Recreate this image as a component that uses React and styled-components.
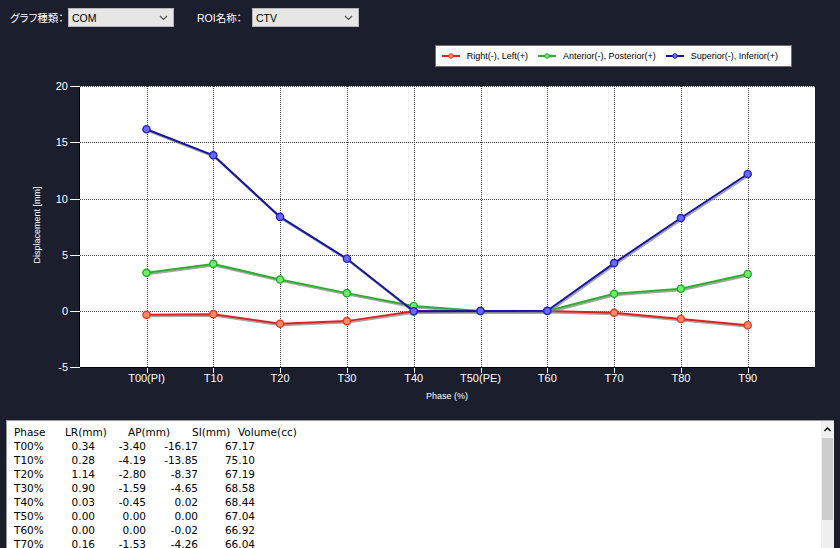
import React from "react";
import styled, { createGlobalStyle } from "styled-components";

const Global = createGlobalStyle`
  html, body { margin: 0; padding: 0; background: #1b1e2d; overflow: hidden; }
  body { width: 840px; height: 548px; font-family: "Liberation Sans", Arial, sans-serif; }
`;

const Page = styled.div`
  width: 840px;
  height: 548px;
  display: flex;
  flex-direction: column;
  background: #1b1e2d;
  overflow: hidden;
  & > * { flex-shrink: 0; }
`;

const TopBar = styled.div`
  display: flex;
  align-items: center;
  height: 19px;
  padding: 8px 0 0 10px;
`;

const Field = styled.div`
  display: flex;
  align-items: center;
  margin-right: ${(p) => p.$mr || 0}px;
`;

const Label = styled.span`
  color: #ffffff;
  font-family: "Liberation Sans", "Noto Sans CJK JP", sans-serif;
  font-size: 10.5px;
  font-feature-settings: "palt";
  width: ${(p) => p.$w}px;
  white-space: nowrap;
`;

const Select = styled.div`
  box-sizing: border-box;
  width: ${(p) => p.$w}px;
  height: 19px;
  background: #e6e6e6;
  border: 1px solid #b4b4b4;
  display: flex;
  align-items: center;
  justify-content: space-between;
  padding: 0 5px 0 3px;
  font-family: "Liberation Sans", Arial, sans-serif;
  font-size: 10.5px;
  color: #000;
`;

const LegendRow = styled.div`
  display: flex;
  justify-content: flex-end;
  padding-right: 48px;
  margin-top: 18px;
`;

const Legend = styled.div`
  box-sizing: border-box;
  height: 22px;
  display: flex;
  align-items: center;
  gap: 10px;
  padding: 0 13px 0 6px;
  background: #ffffff;
  border: 1px solid #6e6e6e;
`;

const LegendItem = styled.div`
  display: flex;
  align-items: center;
  gap: 7px;
  font-family: "Liberation Sans", Arial, sans-serif;
  font-size: 9px;
  color: #000;
  white-space: nowrap;
`;

const ChartSvg = styled.svg`
  display: block;
  width: 840px;
  height: 348px;
`;

const Panel = styled.div`
  box-sizing: border-box;
  margin: 5px 6px 0 6px;
  height: 140px;
  background: #ffffff;
  border-top: 1px solid #9a9a9a;
  border-left: 1px solid #9a9a9a;
  display: flex;
`;

const TableBody = styled.div`
  flex: 1;
  padding: 4px 0 0 7px;
  font-family: "DejaVu Sans", Verdana, sans-serif;
  font-size: 10.5px;
  line-height: 14px;
  color: #000;
`;

const HeaderRow = styled.div`
  display: grid;
  grid-template-columns: 51px 63px 64px 46px auto;
  white-space: nowrap;
`;

const DataRow = styled.div`
  display: grid;
  grid-template-columns: 40px 41px 51px 52px 57px;
  white-space: nowrap;
  & > span { text-align: right; }
  & > span:first-child { text-align: left; }
`;

const Scrollbar = styled.div`
  width: 13px;
  background: #f0f0f0;
  display: flex;
  flex-direction: column;
`;

const ScrollArrow = styled.div`
  height: 17px;
  display: flex;
  align-items: center;
  justify-content: center;
`;

const ScrollThumb = styled.div`
  height: 82px;
  margin: 0 1px;
  background: #cdcdcd;
`;

const Chevron = () => (
  <svg width="9" height="6" viewBox="0 0 9 6">
    <path d="M1 1 L4.5 4.5 L8 1" fill="none" stroke="#555" strokeWidth="1.2" />
  </svg>
);

const series = [
  {
    name: "Right(-), Left(+)",
    line: "#dd2020",
    fill: "#ff8a6a",
    stroke: "#e03a20",
    data: [-0.34, -0.28, -1.14, -0.9, -0.03, 0, 0, -0.16, -0.71, -1.27],
  },
  {
    name: "Anterior(-), Posterior(+)",
    line: "#2eae2e",
    fill: "#6cf06c",
    stroke: "#25a825",
    data: [3.4, 4.19, 2.8, 1.59, 0.45, 0, 0, 1.53, 1.98, 3.29],
  },
  {
    name: "Superior(-), Inferior(+)",
    line: "#1414a4",
    fill: "#6a6af2",
    stroke: "#2222c4",
    data: [16.17, 13.85, 8.37, 4.65, -0.02, 0, 0.02, 4.26, 8.27, 12.19],
  },
];

const cats = ["T00(PI)", "T10", "T20", "T30", "T40", "T50(PE)", "T60", "T70", "T80", "T90"];

const px = (i) => 146.5 + 66.8 * i;
const py = (v) => 311 - v * 11.24;
const gx = (i) => Math.round(px(i)) + 0.5;

const rows = [
  ["T00%", "0.34", "-3.40", "-16.17", "67.17"],
  ["T10%", "0.28", "-4.19", "-13.85", "75.10"],
  ["T20%", "1.14", "-2.80", "-8.37", "67.19"],
  ["T30%", "0.90", "-1.59", "-4.65", "68.58"],
  ["T40%", "0.03", "-0.45", "0.02", "68.44"],
  ["T50%", "0.00", "0.00", "0.00", "67.04"],
  ["T60%", "0.00", "0.00", "-0.02", "66.92"],
  ["T70%", "0.16", "-1.53", "-4.26", "66.04"],
];

const Swatch = ({ s }) => (
  <svg width="18" height="8" viewBox="0 0 18 8">
    <line x1="0" y1="4" x2="18" y2="4" stroke={s.line} strokeWidth="2" />
    <circle cx="9" cy="4" r="2.3" fill={s.fill} stroke={s.stroke} strokeWidth="1" />
  </svg>
);

const Chart = () => {
  const yTicks = [20, 15, 10, 5, 0, -5];
  const points = (s) => s.data.map((v, i) => `${px(i)},${py(v)}`).join(" ");
  return (
    <ChartSvg viewBox="0 67 840 348">
      <rect x="80" y="86" width="735" height="281" fill="#ffffff" />
      {[15, 10, 5, 0].map((v) => (
        <line key={v} x1="80" x2="815" y1={Math.round(py(v)) + 0.5} y2={Math.round(py(v)) + 0.5}
          stroke="#444" strokeWidth="1" strokeDasharray="1 1" shapeRendering="crispEdges" />
      ))}
      <line x1="80" x2="815" y1="86.5" y2="86.5" stroke="#444" strokeDasharray="1 1" shapeRendering="crispEdges" />
      {cats.map((c, i) => (
        <line key={c} x1={gx(i)} x2={gx(i)} y1="86" y2="367" stroke="#444" strokeDasharray="1 1" shapeRendering="crispEdges" />
      ))}
      <line x1="79.5" x2="79.5" y1="86" y2="367.5" stroke="#000" shapeRendering="crispEdges" />
      <line x1="79.5" x2="815" y1="367.5" y2="367.5" stroke="#000" shapeRendering="crispEdges" />
      {yTicks.map((v) => (
        <g key={v}>
          <line x1="70" x2="80" y1={Math.round(py(v)) + 0.5} y2={Math.round(py(v)) + 0.5} stroke="#ffffff" shapeRendering="crispEdges" />
          <text x="68" y={py(v) + 4} fill="#fff" fontSize="11" textAnchor="end" fontFamily="Liberation Sans, Arial, sans-serif">{v}</text>
        </g>
      ))}
      {cats.map((c, i) => (
        <g key={c}>
          <line x1={gx(i)} x2={gx(i)} y1="368" y2="373" stroke="#ffffff" shapeRendering="crispEdges" />
          <text x={px(i)} y="382" fill="#fff" fontSize="11" textAnchor="middle" fontFamily="Liberation Sans, Arial, sans-serif">{c}</text>
        </g>
      ))}
      <text x="447" y="399" fill="#fff" fontSize="9" textAnchor="middle" fontFamily="Liberation Sans, Arial, sans-serif">Phase (%)</text>
      <text x="0" y="0" fill="#fff" fontSize="9" textAnchor="middle" fontFamily="Liberation Sans, Arial, sans-serif"
        transform="translate(40 225) rotate(-90)">Displacement [mm]</text>
      {series.map((s) => (
        <g key={s.name}>
          <polyline points={points(s)} fill="none" stroke="#808080" strokeOpacity="0.7" strokeWidth="2" transform="translate(1 1.5)" />
          <polyline points={points(s)} fill="none" stroke={s.line} strokeWidth="2" strokeLinejoin="round" />
          {s.data.map((v, i) => (
            <circle key={i} cx={px(i)} cy={py(v)} r="3.6" fill={s.fill} stroke={s.stroke} strokeWidth="1.4" />
          ))}
        </g>
      ))}
    </ChartSvg>
  );
};

export default function App() {
  return (
    <Page>
      <Global />
      <TopBar>
        <Field $mr={23}>
          <Label $w={58}>グラフ種類：</Label>
          <Select $w={106}>COM<Chevron /></Select>
        </Field>
        <Field>
          <Label $w={55}>ROI名称：</Label>
          <Select $w={107}>CTV<Chevron /></Select>
        </Field>
      </TopBar>
      <LegendRow>
        <Legend>
          {series.map((s) => (
            <LegendItem key={s.name}>
              <Swatch s={s} />
              {s.name}
            </LegendItem>
          ))}
        </Legend>
      </LegendRow>
      <Chart />
      <Panel>
        <TableBody>
          <HeaderRow>
            <span>Phase</span>
            <span>LR(mm)</span>
            <span>AP(mm)</span>
            <span>SI(mm)</span>
            <span>Volume(cc)</span>
          </HeaderRow>
          {rows.map((r) => (
            <DataRow key={r[0]}>
              {r.map((c, i) => (
                <span key={i}>{c}</span>
              ))}
            </DataRow>
          ))}
        </TableBody>
        <Scrollbar>
          <ScrollArrow>
            <svg width="7" height="5" viewBox="0 0 7 5">
              <path d="M0.5 4 L3.5 1 L6.5 4" fill="none" stroke="#000" strokeWidth="1.3" />
            </svg>
          </ScrollArrow>
          <ScrollThumb />
        </Scrollbar>
      </Panel>
    </Page>
  );
}
